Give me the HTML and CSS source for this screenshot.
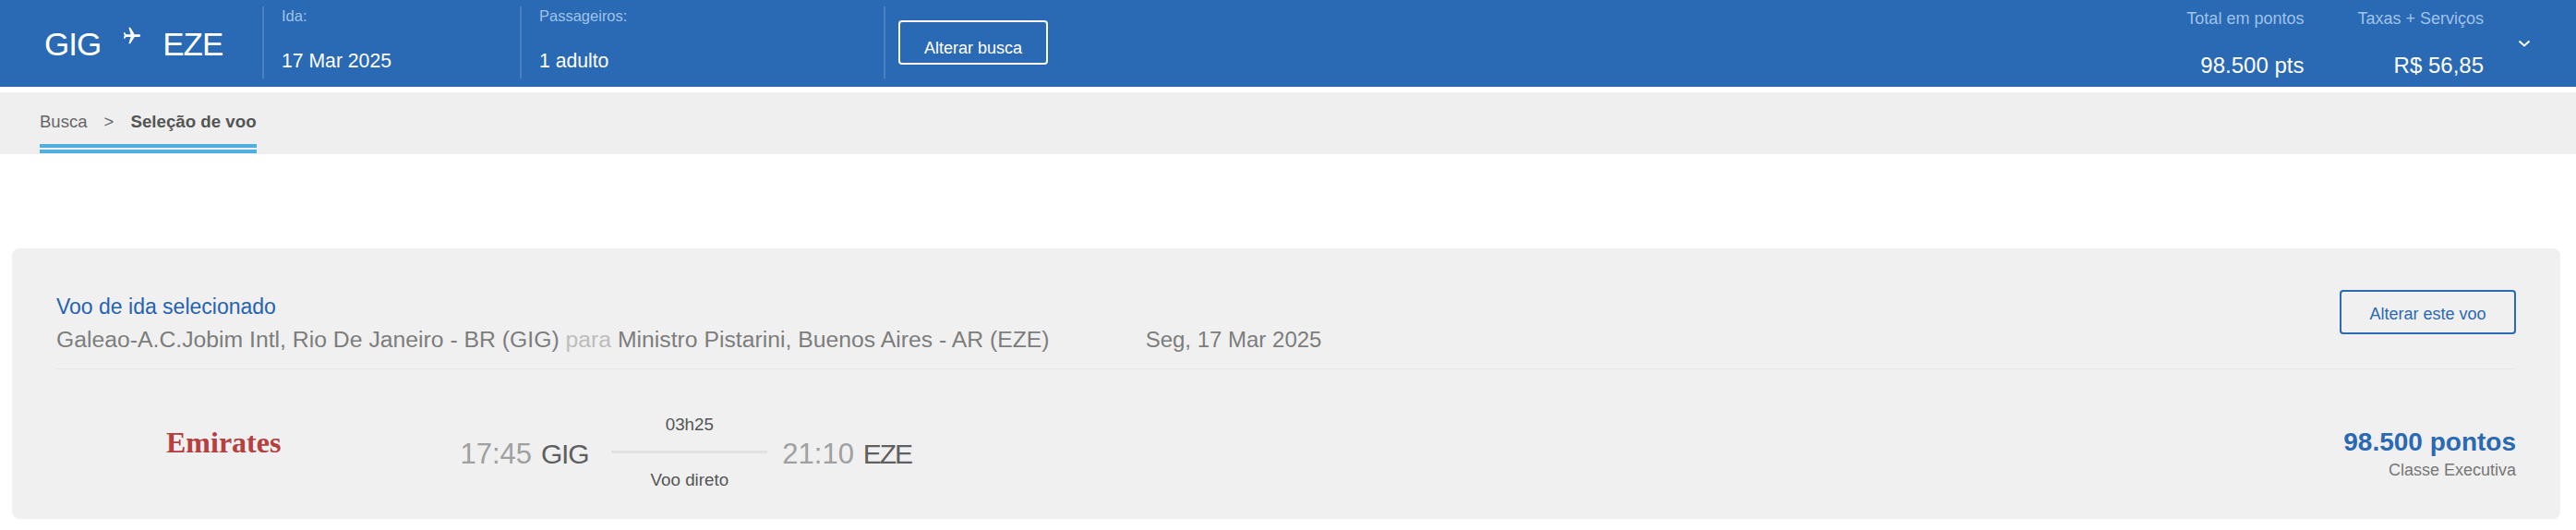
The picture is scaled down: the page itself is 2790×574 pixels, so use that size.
FILE: index.html
```html
<!DOCTYPE html>
<html lang="pt-BR">
<head>
    <meta charset="UTF-8">
    <title>Seleção de voo</title>
    <link rel="stylesheet" href="styles.css">
</head>
<body>
    <!-- Top bar -->
    <header class="topbar">
        <div class="route">
            <span>GIG</span>
            <svg class="plane" viewBox="0 0 24 24"><path transform="rotate(90 12 12)" d="M21 16v-2l-8-5V3.5c0-.83-.67-1.5-1.5-1.5S10 2.67 10 3.5V9l-8 5v2l8-2.5V19l-2 1.5V22l3.5-1 3.5 1v-1.5L13 19v-5.5l8 2.5z"/></svg>
            <span>EZE</span>
        </div>
        <div class="info">
            <span class="info-label">Ida:</span>
            <span class="info-value">17 Mar 2025</span>
        </div>
        <div class="info info-wide">
            <span class="info-label">Passageiros:</span>
            <span class="info-value">1 adulto</span>
        </div>
        <div class="info-action">
            <button class="btn btn-light" type="button">Alterar busca</button>
        </div>
        <div class="totals">
            <div class="total total-points">
                <span class="total-label">Total em pontos</span>
                <span class="total-value">98.500 pts</span>
            </div>
            <div class="total total-fees">
                <span class="total-label">Taxas + Serviços</span>
                <span class="total-value">R$ 56,85</span>
            </div>
            <svg class="chevron" viewBox="0 0 14 8"><path d="M1.5 1.5 7 6.5l5.5-5"/></svg>
        </div>
    </header>

    <!-- Breadcrumb -->
    <nav class="crumbs">
        <div class="crumb-tab">
            <span>Busca</span>
            <span class="crumb-sep">&gt;</span>
            <strong>Seleção de voo</strong>
        </div>
    </nav>

    <!-- Selected flight -->
    <section class="card">
        <div class="card-head">
            <div class="card-title">
                <h2>Voo de ida selecionado</h2>
                <p>
                    <span class="airports">Galeao-A.C.Jobim Intl, Rio De Janeiro - BR (GIG) <em>para</em> Ministro Pistarini, Buenos Aires - AR (EZE)</span>
                    <span class="flight-date">Seg, 17 Mar 2025</span>
                </p>
            </div>
            <button class="btn btn-blue" type="button">Alterar este voo</button>
        </div>
        <div class="flight">
            <div class="airline">Emirates</div>
            <div class="stop">
                <span class="time">17:45</span>
                <span class="code code-gig">GIG</span>
            </div>
            <div class="duration">
                <span>03h25</span>
                <i></i>
                <span>Voo direto</span>
            </div>
            <div class="stop">
                <span class="time">21:10</span>
                <span class="code code-eze">EZE</span>
            </div>
            <div class="price">
                <strong>98.500 pontos</strong>
                <span>Classe Executiva</span>
            </div>
        </div>
    </section>
</body>
</html>
```

FILE: styles.css
```css
body {
    font-family: 'Liberation Sans', Arial, sans-serif;
    background-color: #fff;
    margin: 0;
    padding: 0;
    color: #555;
}
button {
    font-family: inherit;
    font-size: 18px;
    background: none;
    padding: 0;
    border-radius: 4px;
    cursor: pointer;
}
.btn-light {
    width: 162px;
    height: 48px;
    border: 2px solid #fff;
    color: #fff;
    padding-top: 12px;
}
.btn-blue {
    width: 191px;
    height: 48px;
    margin-top: 45px;
    padding-top: 5px;
    border: 2px solid #2a69b3;
    color: #2a69b3;
}

/* Top bar */
.topbar {
    display: flex;
    height: 94px;
    background-color: #2a69b3;
    color: #fff;
}
.route {
    display: flex;
    align-items: flex-start;
    width: 284px;
    box-sizing: border-box;
    padding: 28px 0 0 48px;
    font-size: 35px;
    line-height: 40px;
    letter-spacing: -1px;
}
.plane {
    width: 22px;
    height: 22px;
    margin: 0 22px 0 23px;
    fill: #fff;
}
.info {
    display: flex;
    flex-direction: column;
    justify-content: space-between;
    width: 279px;
    box-sizing: border-box;
    height: 78px;
    margin-top: 7px;
    padding: 0 0 6px 19px;
    border-left: 2px solid #4a80c0;
}
.info-wide {
    width: 394px;
}
.info-label {
    font-size: 16.5px;
    line-height: 20px;
    color: #9fc3ea;
}
.info-value {
    font-size: 21.2px;
    line-height: 26px;
}
.info-action {
    box-sizing: border-box;
    height: 78px;
    margin-top: 7px;
    padding: 15px 0 0 14px;
    border-left: 2px solid #4a80c0;
}
.totals {
    display: flex;
    margin-left: auto;
    padding-right: 49px;
}
.total {
    display: flex;
    flex-direction: column;
    align-items: flex-end;
}
.total-fees {
    margin-left: 58px;
}
.total-label {
    font-size: 18px;
    line-height: 22px;
    margin-top: 9px;
    color: #9fc3ea;
}
.total-value {
    font-size: 24px;
    line-height: 28px;
    margin-top: 26px;
}
.chevron {
    width: 14px;
    height: 8px;
    margin: 43px 0 0 37px;
    fill: none;
    stroke: #fff;
    stroke-width: 2;
}

/* Breadcrumb */
.crumbs {
    height: 67px;
    margin-top: 6px;
    padding-left: 43px;
    background-color: #efefef;
}
.crumb-tab {
    display: inline-block;
    box-sizing: border-box;
    width: 235px;
    height: 66px;
    padding-top: 21px;
    font-size: 18.5px;
    line-height: 22px;
    white-space: nowrap;
    color: #666;
    border-bottom: 4px solid #4fb0e0;
    position: relative;
}
.crumb-tab::after {
    content: "";
    position: absolute;
    left: 0;
    right: 0;
    bottom: 2px;
    height: 4px;
    background-color: #4fb0e0;
}
.crumb-tab strong {
    font-size: 18.7px;
    color: #555;
}
.crumb-sep {
    margin: 0 13px 0 13px;
}

/* Selected flight */
.card {
    box-sizing: border-box;
    height: 293px;
    margin: 102px 17px 0 13px;
    padding: 0 48px;
    background-color: #f0f0f0;
    border-radius: 8px;
}
.card-head {
    display: flex;
    justify-content: space-between;
    height: 131px;
    box-sizing: border-box;
    border-bottom: 1px solid #e6e6e6;
}
.card-title h2 {
    margin: 50px 0 0;
    font-size: 23px;
    font-weight: normal;
    line-height: 26px;
    color: #2563b0;
}
.card-title p {
    display: flex;
    margin: 9px 0 0;
    font-size: 24px;
    line-height: 28px;
    color: #7d7d7d;
}
.airports {
    font-size: 24.75px;
}
.airports em {
    font-style: normal;
    color: #bdbdbd;
}
.flight-date {
    margin-left: 104px;
}
.flight {
    display: flex;
}
.airline {
    width: 437.5px;
    padding: 61px 0 0 119px;
    box-sizing: border-box;
    font-family: 'Liberation Serif', serif;
    font-size: 32px;
    font-weight: bold;
    line-height: 36px;
    color: #b5403f;
}
.stop {
    margin-top: 74px;
    font-size: 30px;
    line-height: 36px;
    white-space: nowrap;
}
.time {
    font-size: 31px;
    color: #a0a0a0;
}
.code {
    margin-left: 1.5px;
    color: #5f5f5f;
}
.code-gig {
    letter-spacing: -1.2px;
}
.code-eze {
    letter-spacing: -2px;
}
.duration {
    display: flex;
    flex-direction: column;
    align-items: center;
    width: 169px;
    margin: 49px 16px 0 25px;
    font-size: 18.8px;
    line-height: 22px;
    color: #555;
}
.duration i {
    align-self: stretch;
    height: 3px;
    margin: 17px 0 18px;
    background-color: #e2e2e2;
}
.price {
    display: flex;
    flex-direction: column;
    align-items: flex-end;
    margin-left: auto;
    margin-top: 63px;
}
.price strong {
    font-size: 28px;
    line-height: 32px;
    color: #2a69b3;
}
.price span {
    font-size: 18px;
    line-height: 22px;
    margin-top: 3px;
    color: #777;
}
```
